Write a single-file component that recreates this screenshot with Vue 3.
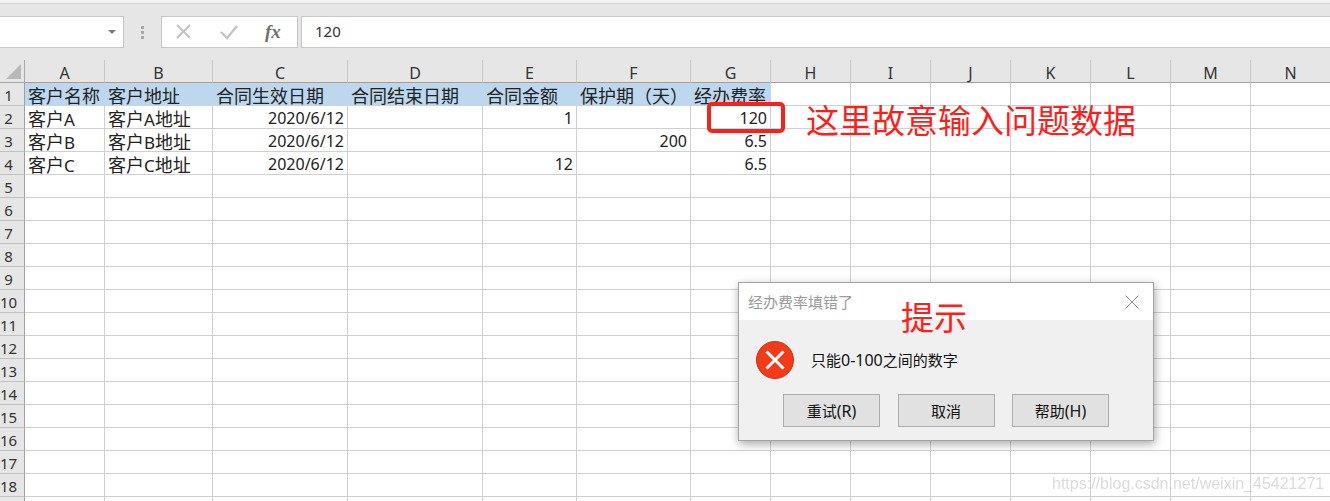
<script setup>
const columns = ['A', 'B', 'C', 'D', 'E', 'F', 'G', 'H', 'I', 'J', 'K', 'L', 'M', 'N']
const head = ['客户名称', '客户地址', '合同生效日期', '合同结束日期', '合同金额', '保护期（天）', '经办费率']
const data = [
  ['客户A', '客户A地址', '2020/6/12', '', '1', '', '120'],
  ['客户B', '客户B地址', '2020/6/12', '', '', '200', '6.5'],
  ['客户C', '客户C地址', '2020/6/12', '', '12', '', '6.5'],
]
const rows = Array.from({ length: 19 }, (_, r) =>
  columns.map((_, c) => {
    if (r === 0) return { parts: [head[c] || ''], fill: c < 7, num: false }
    const v = (data[r - 1] || [])[c] || ''
    const num = c >= 2 && v !== ''
    return { parts: num ? [v] : v.split(/([A-Z])/), fill: false, num }
  })
)
</script>

<template>
  <div class="page">
    <div class="topstrip"></div>
    <div class="toolbar">
      <div class="namebox"><span class="caret"></span></div>
      <div class="grip"><i></i><i></i><i></i></div>
      <div class="fnbox">
        <svg width="20" height="16" viewBox="0 0 20 16"><path d="M3 1l13 13M16 1L3 14" stroke="#c4c4c4" stroke-width="2" fill="none"/></svg>
        <svg class="check" width="20" height="16" viewBox="0 0 20 16"><path d="M2 8l6 6L18 2" stroke="#c4c4c4" stroke-width="2.4" fill="none"/></svg>
        <span class="fx">fx</span>
      </div>
      <div class="input">120</div>
    </div>

    <div class="sheet">
      <div class="corner"><span class="tri"></span></div>
      <div v-for="c in columns" :key="c" class="colhead">{{ c }}</div>
      <template v-for="(row, r) in rows" :key="r">
        <div class="rowhead">{{ r < 18 ? r + 1 : '' }}</div>
        <div
          v-for="(cell, c) in row"
          :key="c"
          class="cell"
          :class="{ fill: cell.fill, num: cell.num }"
        ><template v-for="(p, i) in cell.parts" :key="i"><span v-if="i % 2" class="latin">{{ p }}</span><template v-else>{{ p }}</template></template></div>
      </template>
    </div>

    <div class="mark"></div>
    <div class="note">这里故意输入问题数据</div>

    <div class="dialog">
      <div class="titlebar">
        <span class="title">经办费率填错了</span>
        <svg class="close" width="14" height="14" viewBox="0 0 14 14"><path d="M.5.5l13 13M13.5.5l-13 13" stroke="#8a8a8a" stroke-width="1" fill="none"/></svg>
      </div>
      <div class="body">
        <div class="msg">
          <svg width="40" height="40" viewBox="0 0 40 40">
            <circle cx="20" cy="20" r="18.5" fill="#f33b19" stroke="#c9331a" stroke-width="1"/>
            <path d="M11.5 11.5l17 17M28.5 11.5l-17 17" stroke="#fff" stroke-width="3" fill="none"/>
          </svg>
          <span>只能<span class="mlatin">0-100</span>之间的数字</span>
        </div>
        <div class="btns">
          <button>重试<span class="mlatin">(R)</span></button>
          <button>取消</button>
          <button>帮助<span class="mlatin">(H)</span></button>
        </div>
      </div>
    </div>
    <div class="tip">提示</div>
    <div class="wm">https://blog.csdn.net/weixin_45421271</div>
  </div>
</template>

<style>
html, body { margin: 0; background: #fff; }
</style>

<style scoped>
.page {
  position: relative;
  width: 1330px;
  height: 501px;
  overflow: hidden;
  background: #fff;
  font-family: "Noto Sans", "Noto Sans CJK SC", sans-serif;
  color: #222;
}
.topstrip {
  height: 4px;
  box-sizing: border-box;
  background: #f3f3f3;
  border-bottom: 1px solid #d2d2d2;
}
.toolbar {
  height: 56px;
  box-sizing: border-box;
  display: flex;
  align-items: flex-start;
  padding-top: 12px;
  background: #e6e6e6;
}
.namebox {
  width: 124px;
  height: 32px;
  box-sizing: border-box;
  background: #fff;
  border: 1px solid #c6c6c6;
  border-left: 0;
  position: relative;
  flex: none;
}
.caret {
  position: absolute;
  right: 7px;
  top: 13px;
  border: 4px solid transparent;
  border-top: 4px solid #777;
}
.grip {
  width: 37px;
  flex: none;
  display: flex;
  flex-direction: column;
  align-items: center;
  gap: 2px;
  padding-top: 10px;
}
.grip i { width: 3px; height: 3px; background: #a8a8a8; }
.fnbox {
  width: 137px;
  height: 32px;
  box-sizing: border-box;
  flex: none;
  background: #fff;
  border: 1px solid #c6c6c6;
  display: flex;
  align-items: center;
  gap: 26px;
  padding-left: 12px;
}
.check { margin-left: -1px; }
.fx {
  font: italic bold 19px "Liberation Serif", serif;
  color: #707070;
}
.input {
  margin-left: 3px;
  flex: 1;
  height: 32px;
  box-sizing: border-box;
  background: #fff;
  border: 1px solid #c6c6c6;
  border-right: 0;
  padding-left: 13px;
  font-size: 15px;
  line-height: 29px;
  color: #333;
}
.sheet {
  display: grid;
  grid-template-columns: 25px 80px 108px 135px 135px 94px 114px 80px 80px 80px 80px 80px 80px 80px 80px;
  grid-auto-rows: 23px;
}
.corner, .colhead, .rowhead, .cell {
  box-sizing: border-box;
  white-space: nowrap;
}
.corner {
  background: #e6e6e6;
  border-right: 1px solid #a8a8a8;
  border-bottom: 1px solid #a8a8a8;
  position: relative;
}
.tri {
  position: absolute;
  right: 3px;
  bottom: 3px;
  width: 0;
  height: 0;
  border-left: 15px solid transparent;
  border-bottom: 15px solid #b8b8b8;
}
.colhead {
  background: #e6e6e6;
  border-right: 1px solid #c8c8c8;
  border-bottom: 1px solid #a0a0a0;
  text-align: center;
  font-size: 16px;
  line-height: 24px;
  padding-top: 1px;
  color: #333;
}
.rowhead {
  background: #e6e6e6;
  border-right: 1px solid #a0a0a0;
  border-bottom: 1px solid #c0c0c0;
  font-size: 15px;
  line-height: 24px;
  color: #333;
  display: flex;
  justify-content: center;
  padding-right: 7px;
}
.cell {
  border-right: 1px solid #d0d0d0;
  border-bottom: 1px solid #d0d0d0;
  padding: 1px 3px 0 3px;
  font-family: "Noto Sans CJK SC", "Noto Sans", sans-serif;
  font-size: 18px;
  line-height: 22px;
  color: #222;
}
.latin {
  font-family: "Noto Sans", sans-serif;
  font-size: 17px;
}
.cell.fill {
  background: #bdd7ee;
  border-color: #bdd7ee;
}
.cell.num {
  text-align: right;
  font-family: "Noto Sans", sans-serif;
  font-size: 16px;
  line-height: 23px;
}
.mark {
  position: absolute;
  left: 707px;
  top: 102px;
  width: 78px;
  height: 31px;
  box-sizing: border-box;
  border: 4px solid #f8211c;
  border-radius: 5px;
}
.note, .tip {
  position: absolute;
  font-family: "Noto Sans CJK SC", sans-serif;
  font-size: 33px;
  line-height: 40px;
  color: #fc1f1c;
  white-space: nowrap;
}
.note { left: 806px; top: 99px; }
.tip { left: 901px; top: 296px; }
.dialog {
  position: absolute;
  left: 738px;
  top: 282px;
  width: 416px;
  height: 159px;
  box-sizing: border-box;
  border: 1px solid #a3a3a3;
  box-shadow: 1px 3px 9px rgba(0, 0, 0, .35);
  display: flex;
  flex-direction: column;
  font-family: "Noto Sans CJK SC", sans-serif;
}
.titlebar {
  height: 37px;
  flex: none;
  background: #fff;
  display: flex;
  align-items: center;
  justify-content: space-between;
  padding: 0 14px 0 9px;
}
.title { font-size: 15px; color: #9a9a9a; }
.body {
  flex: 1;
  background: #f0f0f0;
  display: flex;
  flex-direction: column;
}
.msg {
  display: flex;
  align-items: center;
  gap: 16px;
  padding: 20px 0 0 16px;
  font-size: 15px;
  color: #111;
}
.mlatin {
  font-family: "Noto Sans", sans-serif;
  font-size: 16px;
}
.btns {
  display: flex;
  gap: 17.5px;
  padding: 14px 0 0 44px;
}
.btns button {
  width: 97px;
  height: 33px;
  box-sizing: border-box;
  padding: 0;
  background: #e1e1e1;
  border: 1px solid #adadad;
  font: 15px "Noto Sans CJK SC", sans-serif;
  color: #111;
}
.wm {
  position: absolute;
  left: 1052px;
  top: 475px;
  font: 16px "Liberation Sans", sans-serif;
  color: rgba(190, 190, 190, .55);
  white-space: nowrap;
  filter: blur(.4px);
}
</style>
